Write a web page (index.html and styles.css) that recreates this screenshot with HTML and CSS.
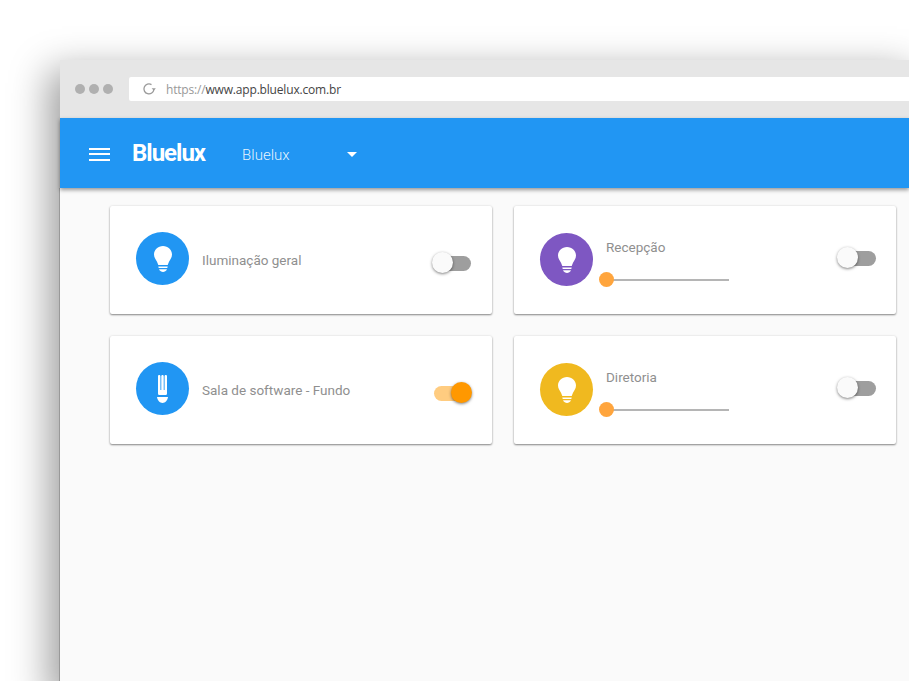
FILE: index.html
```html
<!DOCTYPE html>
<html lang="en">
<head>
    <meta charset="UTF-8">
    <meta name="viewport" content="width=device-width, initial-scale=1.0">
    <title>Bluelux</title>
    <link rel="stylesheet" href="styles.css">
</head>
<body>
    <div class="browser">
        <div class="browser-bar">
            <div class="dots"><span></span><span></span><span></span></div>
            <div class="address">
                <svg class="reload" width="14" height="14" viewBox="0 0 14 14" fill="none">
                    <path d="M11.900 7.500A5 5 0 1 1 9.500 2.600" stroke="#9a9a9a" stroke-width="1.300"/>
                    <path d="M9.600 6.300H13.800L11.900 8.800Z" fill="#9a9a9a"/>
                </svg>
                <span class="url"><span class="url-scheme">https://</span>www.app.bluelux.com.br</span>
            </div>
        </div>
        <header class="appbar">
            <div class="menu-icon"><span></span><span></span><span></span></div>
            <div class="brand">Bluelux</div>
            <div class="place">Bluelux</div>
            <div class="caret"></div>
        </header>
        <main class="content">
            <div class="card">
                <div class="circle blue">
                    <svg class="bulb" width="18" height="26" viewBox="0 0 18 26"><path d="M9 0C4 0 0 3.700 0 8.500C0 12 2 13.500 3 15.800L4.300 19H13.700L15 15.800C16 13.500 18 12 18 8.500C18 3.700 14 0 9 0Z"/><path d="M4.300 20.600H13.700L13.300 22H4.700Z"/><path d="M5 23.300H13C12.200 25 10.500 26 9 26S5.800 25 5 23.300Z"/></svg>
                </div>
                <div class="name">Iluminação geral</div>
                <div class="toggle"><span class="knob"></span></div>
            </div>
            <div class="card dimmer">
                <div class="circle purple">
                    <svg class="bulb" width="18" height="26" viewBox="0 0 18 26"><path d="M9 0C4 0 0 3.700 0 8.500C0 12 2 13.500 3 15.800L4.300 19H13.700L15 15.800C16 13.500 18 12 18 8.500C18 3.700 14 0 9 0Z"/><path d="M4.300 20.600H13.700L13.300 22H4.700Z"/><path d="M5 23.300H13C12.200 25 10.500 26 9 26S5.800 25 5 23.300Z"/></svg>
                </div>
                <div class="info">
                    <div class="name">Recepção</div>
                    <div class="slider"><span class="thumb"></span></div>
                </div>
                <div class="toggle"><span class="knob"></span></div>
            </div>
            <div class="card">
                <div class="circle blue">
                    <svg class="bulb" width="11" height="28" viewBox="0 0 11 28"><path d="M1 1.200C1 .4 1.600 0 2.200 0S3.400 .4 3.400 1.200V15H4.300V1.200C4.300 .4 4.900 0 5.500 0S6.700 .4 6.700 1.200V15H7.600V1.200C7.600 .4 8.200 0 8.800 0S10 .4 10 1.200V18.500C10 19.300 9.500 20 8.800 20H2.200C1.500 20 1 19.300 1 18.500Z"/><path d="M0 22H11C10.700 25 8.200 28 5.500 28S.3 25 0 22Z"/></svg>
                </div>
                <div class="name">Sala de software - Fundo</div>
                <div class="toggle on"><span class="knob"></span></div>
            </div>
            <div class="card dimmer">
                <div class="circle yellow">
                    <svg class="bulb" width="18" height="26" viewBox="0 0 18 26"><path d="M9 0C4 0 0 3.700 0 8.500C0 12 2 13.500 3 15.800L4.300 19H13.700L15 15.800C16 13.500 18 12 18 8.500C18 3.700 14 0 9 0Z"/><path d="M4.300 20.600H13.700L13.300 22H4.700Z"/><path d="M5 23.300H13C12.200 25 10.500 26 9 26S5.800 25 5 23.300Z"/></svg>
                </div>
                <div class="info">
                    <div class="name">Diretoria</div>
                    <div class="slider"><span class="thumb"></span></div>
                </div>
                <div class="toggle"><span class="knob"></span></div>
            </div>
        </main>
    </div>
</body>
</html>
```

FILE: styles.css
```css
html, body {
    height: 100%;
}
body {
    font-family: 'Roboto', sans-serif;
    background-color: #fff;
    margin: 0;
    padding: 60px 0 0 60px;
    box-sizing: border-box;
    display: flex;
    overflow: hidden;
}
.browser {
    flex: 1;
    min-width: 0;
    display: flex;
    flex-direction: column;
    background-color: #fafafa;
    box-shadow: -5px 16px 36px 6px rgba(0, 0, 0, 0.38);
}
.browser-bar {
    height: 58px;
    flex: none;
    display: flex;
    align-items: center;
    background-color: #e6e6e6;
    padding: 0 0 0 15px;
    box-sizing: border-box;
}
.dots {
    display: flex;
    gap: 4px;
    margin-right: 16px;
}
.dots span {
    width: 10px;
    height: 10px;
    border-radius: 50%;
    background-color: #b0b0b0;
}
.address {
    flex: 1;
    height: 24px;
    display: flex;
    align-items: center;
    background-color: #fff;
    border-radius: 2px 0 0 2px;
    padding-left: 13px;
}
.reload {
    margin-right: 10px;
}
.url {
    font-family: 'Open Sans', sans-serif;
    font-size: 12px;
    letter-spacing: -0.18px;
    color: #444;
}
.url-scheme {
    color: #999;
}
.appbar {
    height: 70px;
    flex: none;
    display: flex;
    align-items: center;
    background-color: #2196f3;
    box-shadow: 0 2px 4px rgba(0, 0, 0, 0.4);
    color: #fff;
    position: relative;
}
.menu-icon {
    display: flex;
    flex-direction: column;
    gap: 3.5px;
    width: 21px;
    margin: 2px 0 0 29px;
}
.menu-icon span {
    height: 2px;
    background-color: #fff;
}
.brand {
    font-size: 24px;
    font-weight: 700;
    letter-spacing: -1px;
    margin-left: 22px;
}
.place {
    font-size: 15px;
    font-weight: 300;
    color: rgba(255, 255, 255, 0.9);
    margin: 4px 0 0 37px;
}
.caret {
    width: 0;
    height: 0;
    border-left: 5.5px solid transparent;
    border-right: 5.5px solid transparent;
    border-top: 5.5px solid #fff;
    margin: 2px 0 0 57px;
}
.content {
    flex: 1;
    display: grid;
    grid-template-columns: 382px 382px;
    grid-auto-rows: 108px;
    gap: 22px;
    align-content: start;
    padding: 18px 0 0 50px;
    box-shadow: -1px 0 0 #999;
}
.card {
    display: flex;
    align-items: flex-start;
    background-color: #fff;
    border-radius: 2px;
    box-shadow: 0 1px 2px rgba(0, 0, 0, 0.45), 0 0 3px rgba(0, 0, 0, 0.08);
    padding: 26px 21px 0 26px;
}
.circle {
    width: 53px;
    height: 53px;
    flex: none;
    display: flex;
    align-items: center;
    justify-content: center;
    border-radius: 50%;
    margin-right: 13px;
}
.blue {
    background-color: #2196f3;
}
.purple {
    background-color: #7e57c2;
}
.yellow {
    background-color: #f0b91f;
}
.bulb {
    fill: #fff;
}
.name {
    font-size: 13.5px;
    line-height: 20px;
    color: #8f8f8f;
    margin-top: 18px;
}
.info {
    width: 123px;
}
.info .name {
    margin-top: 5px;
}
.slider {
    height: 2px;
    background-color: #b5b5b5;
    margin-top: 22px;
    position: relative;
}
.thumb {
    position: absolute;
    left: -7px;
    top: -7px;
    width: 15px;
    height: 15px;
    border-radius: 50%;
    background-color: #ffa53d;
}
.toggle {
    width: 37px;
    height: 15px;
    flex: none;
    margin: 24px 0 0 auto;
    border-radius: 8px;
    background-color: #9e9e9e;
    position: relative;
}
.knob {
    position: absolute;
    left: -2px;
    top: -4px;
    width: 21px;
    height: 21px;
    border-radius: 50%;
    background-color: #fafafa;
    box-shadow: 0 1px 3px rgba(0, 0, 0, 0.5);
}
.toggle.on {
    background-color: #ffcc80;
}
.toggle.on .knob {
    left: 17px;
    background-color: #ff9800;
}
.dimmer {
    padding-right: 20px;
}
.dimmer .circle {
    margin-top: 1px;
}
.dimmer .toggle {
    width: 38px;
    margin-top: 19px;
}
.dimmer .knob {
    left: -1px;
}
```
